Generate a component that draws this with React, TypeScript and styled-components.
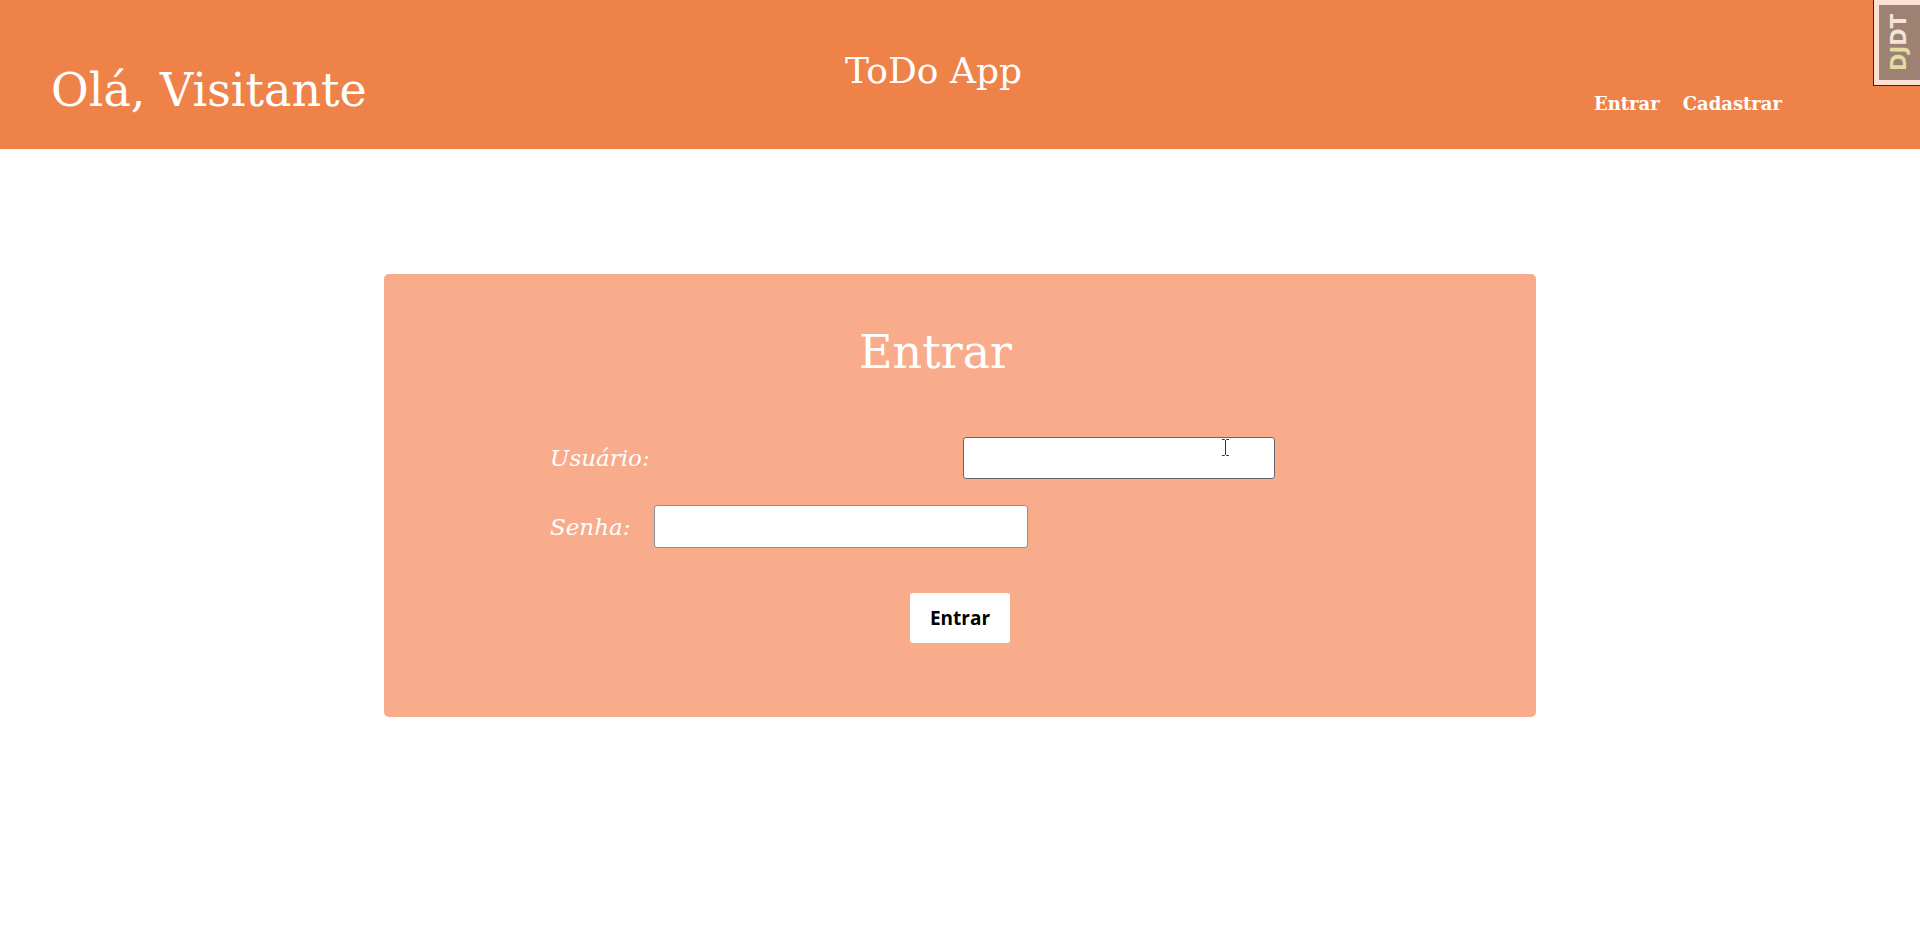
import React from "react";
import styled, { createGlobalStyle } from "styled-components";

const GlobalStyle = createGlobalStyle`
  html, body {
    margin: 0;
    padding: 0;
    background: #ffffff;
  }
  body {
    font-family: "DejaVu Serif", "Liberation Serif", serif;
    color: #ffffff;
  }
  * { box-sizing: border-box; }
`;

const Page = styled.div`
  min-height: 936px;
  background: #ffffff;
`;

const Header = styled.header`
  height: 149px;
  background: #ef8249;
  display: grid;
  grid-template-columns: minmax(0, 1fr) auto minmax(0, 1fr);
  align-items: start;
  padding-right: 53px;
`;

const Greeting = styled.div`
  font-size: 46px;
  line-height: 1;
  margin-top: 67px;
  padding-left: 51px;
  white-space: nowrap;
`;

const AppTitle = styled.div`
  font-size: 36px;
  line-height: 1;
  margin-top: 53px;
  white-space: nowrap;
`;

const Nav = styled.nav`
  justify-self: end;
  display: flex;
  gap: 23px;
  margin-top: 95px;
  margin-right: 85px;
`;

const NavLink = styled.a`
  font-size: 18px;
  line-height: 1;
  font-weight: bold;
  color: #ffffff;
  text-decoration: none;
  cursor: pointer;
`;

const Main = styled.main`
  padding-top: 125px;
`;

const Card = styled.section`
  width: 1152px;
  margin: 0 auto;
  background: #f8ac8c;
  border-radius: 5px;
  padding: 55px 0 74px 0;
`;

const CardTitle = styled.h2`
  margin: 0;
  padding-right: 49px;
  font-size: 46px;
  font-weight: normal;
  line-height: 1;
  text-align: center;
`;

const Form = styled.form`
  margin-top: 62px;
  padding-left: 166px;
  display: flex;
  flex-direction: column;
`;

const Field = styled.div<{ $offset: number; $gapBelow: number }>`
  display: grid;
  grid-template-columns: ${(p) => p.$offset}px auto;
  align-items: center;
  margin-bottom: ${(p) => p.$gapBelow}px;
`;

const Label = styled.label`
  font-size: 23px;
  font-style: italic;
  line-height: 1;
  color: #ffffff;
  white-space: nowrap;
  padding-top: 1px;
`;

const InputWrap = styled.div`
  position: relative;
  display: flex;
`;

const TextInput = styled.input<{ $width: number; $height: number; $hovered?: boolean }>`
  width: ${(p) => p.$width}px;
  height: ${(p) => p.$height}px;
  background: #ffffff;
  border: 1px solid ${(p) => (p.$hovered ? "#66666e" : "#8f8f9d")};
  border-radius: 3px;
  padding: 0 6px;
  font-size: 16px;
  outline: none;
`;

const MouseCursor = styled.svg`
  position: absolute;
  left: 258px;
  top: 1px;
  pointer-events: none;
`;

const SubmitButton = styled.button`
  align-self: center;
  margin-left: -166px;
  width: 100px;
  height: 50px;
  background: #ffffff;
  border: none;
  border-radius: 3px;
  font-family: "Open Sans", "Noto Sans", sans-serif;
  font-weight: bold;
  font-size: 19px;
  color: #000000;
  cursor: pointer;
`;

const DebugHandle = styled.div`
  position: fixed;
  top: 0;
  right: 0;
  width: 47px;
  height: 86px;
  background: #fbe2d5;
  border-left: 1px solid #3b2418;
  border-bottom: 1px solid #3b2418;
  padding: 5px 0 5px 5px;
`;

const DebugButton = styled.div`
  width: 100%;
  height: 100%;
  background: #9d8273;
  display: flex;
  align-items: center;
  justify-content: center;
`;

const DebugText = styled.span`
  writing-mode: vertical-rl;
  transform: rotate(180deg);
  font-family: "DejaVu Sans", "Liberation Sans", sans-serif;
  font-weight: bold;
  font-size: 21px;
  line-height: 1;
`;

const DebugPart = styled.span<{ $color: string }>`
  color: ${(p) => p.$color};
`;

export default function App() {
  return (
    <Page>
      <GlobalStyle />
      <Header>
        <Greeting>Olá, Visitante</Greeting>
        <AppTitle>ToDo App</AppTitle>
        <Nav>
          <NavLink>Entrar</NavLink>
          <NavLink>Cadastrar</NavLink>
        </Nav>
      </Header>
      <Main>
        <Card>
          <CardTitle>Entrar</CardTitle>
          <Form onSubmit={(e) => e.preventDefault()}>
            <Field $offset={413} $gapBelow={26}>
              <Label htmlFor="username">Usuário:</Label>
              <InputWrap>
                <TextInput id="username" type="text" $width={312} $height={42} $hovered />
                <MouseCursor width="9" height="19" viewBox="0 0 9 19">
                  <path
                    d="M1 1.5h2.5l1 1 1-1H8M4.5 2.5v14M1 17.5h2.5l1-1 1 1H8"
                    fill="none"
                    stroke="#ffffff"
                    strokeWidth="2.6"
                    opacity="0.8"
                  />
                  <path
                    d="M1 1.5h2.5l1 1 1-1H8M4.5 2.5v14M1 17.5h2.5l1-1 1 1H8"
                    fill="none"
                    stroke="#333333"
                    strokeWidth="1"
                  />
                </MouseCursor>
              </InputWrap>
            </Field>
            <Field $offset={104} $gapBelow={45}>
              <Label htmlFor="password">Senha:</Label>
              <InputWrap>
                <TextInput id="password" type="password" $width={374} $height={43} />
              </InputWrap>
            </Field>
            <SubmitButton type="submit">Entrar</SubmitButton>
          </Form>
        </Card>
      </Main>
      <DebugHandle>
        <DebugButton>
          <DebugText>
            <DebugPart $color="#e3dca3">DJ</DebugPart>
            <DebugPart $color="#f6e2d8">DT</DebugPart>
          </DebugText>
        </DebugButton>
      </DebugHandle>
    </Page>
  );
}
